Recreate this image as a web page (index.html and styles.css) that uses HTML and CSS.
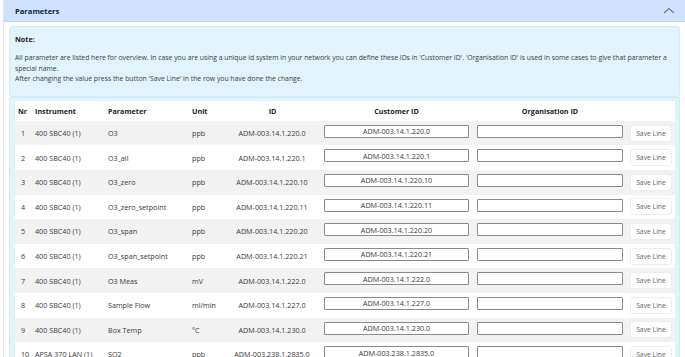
FILE: index.html
```html
<!DOCTYPE html>
<html lang="en">
<head>
    <meta charset="UTF-8">
    <title>Parameters</title>
    <link rel="stylesheet" href="styles.css">
</head>
<body>

    <div class="card">
        <div class="card-header">
            <span class="card-title">Parameters</span>
            <svg class="chevron" width="12" height="7" viewBox="0 0 12 7">
                <polyline points="1,6 6,1.5 11,6" fill="none" stroke="#6c7a92" stroke-width="1.2"/>
            </svg>
        </div>

        <div class="card-body">
            <div class="note">
                <p class="note-title">Note:</p>
                <p class="note-text">All parameter are listed here for overview. In case you are using a unique id system in your network you can define these IDs in 'Customer ID'. 'Organisation ID' is used in some cases to give that parameter a special name.<br>After changing the value press the button 'Save Line' in the row you have done the change.</p>
            </div>

            <div class="table-box">
                <table class="param-table">
                    <colgroup>
                        <col class="c-nr">
                        <col class="c-inst">
                        <col class="c-par">
                        <col class="c-unit">
                        <col class="c-id">
                        <col class="c-cust">
                        <col class="c-org">
                        <col class="c-save">
                    </colgroup>
                    <thead>
                        <tr>
                            <th>Nr</th>
                            <th>Instrument</th>
                            <th>Parameter</th>
                            <th>Unit</th>
                            <th class="center">ID</th>
                            <th class="center">Customer ID</th>
                            <th class="center">Organisation ID</th>
                            <th></th>
                        </tr>
                    </thead>
                    <tbody>
                        <tr>
                            <td class="nr">1</td><td>400 SBC40 (1)</td><td>O3</td><td>ppb</td>
                            <td class="center">ADM-003.14.1.220.0</td>
                            <td class="field"><input type="text" value="ADM-003.14.1.220.0"></td>
                            <td class="field"><input type="text" value=""></td>
                            <td><button class="save-btn">Save Line</button></td>
                        </tr>
                        <tr>
                            <td class="nr">2</td><td>400 SBC40 (1)</td><td>O3_all</td><td>ppb</td>
                            <td class="center">ADM-003.14.1.220.1</td>
                            <td class="field"><input type="text" value="ADM-003.14.1.220.1"></td>
                            <td class="field"><input type="text" value=""></td>
                            <td><button class="save-btn">Save Line</button></td>
                        </tr>
                        <tr>
                            <td class="nr">3</td><td>400 SBC40 (1)</td><td>O3_zero</td><td>ppb</td>
                            <td class="center">ADM-003.14.1.220.10</td>
                            <td class="field"><input type="text" value="ADM-003.14.1.220.10"></td>
                            <td class="field"><input type="text" value=""></td>
                            <td><button class="save-btn">Save Line</button></td>
                        </tr>
                        <tr>
                            <td class="nr">4</td><td>400 SBC40 (1)</td><td>O3_zero_setpoint</td><td>ppb</td>
                            <td class="center">ADM-003.14.1.220.11</td>
                            <td class="field"><input type="text" value="ADM-003.14.1.220.11"></td>
                            <td class="field"><input type="text" value=""></td>
                            <td><button class="save-btn">Save Line</button></td>
                        </tr>
                        <tr>
                            <td class="nr">5</td><td>400 SBC40 (1)</td><td>O3_span</td><td>ppb</td>
                            <td class="center">ADM-003.14.1.220.20</td>
                            <td class="field"><input type="text" value="ADM-003.14.1.220.20"></td>
                            <td class="field"><input type="text" value=""></td>
                            <td><button class="save-btn">Save Line</button></td>
                        </tr>
                        <tr>
                            <td class="nr">6</td><td>400 SBC40 (1)</td><td>O3_span_setpoint</td><td>ppb</td>
                            <td class="center">ADM-003.14.1.220.21</td>
                            <td class="field"><input type="text" value="ADM-003.14.1.220.21"></td>
                            <td class="field"><input type="text" value=""></td>
                            <td><button class="save-btn">Save Line</button></td>
                        </tr>
                        <tr>
                            <td class="nr">7</td><td>400 SBC40 (1)</td><td>O3 Meas</td><td>mV</td>
                            <td class="center">ADM-003.14.1.222.0</td>
                            <td class="field"><input type="text" value="ADM-003.14.1.222.0"></td>
                            <td class="field"><input type="text" value=""></td>
                            <td><button class="save-btn">Save Line</button></td>
                        </tr>
                        <tr>
                            <td class="nr">8</td><td>400 SBC40 (1)</td><td>Sample Flow</td><td>ml/min</td>
                            <td class="center">ADM-003.14.1.227.0</td>
                            <td class="field"><input type="text" value="ADM-003.14.1.227.0"></td>
                            <td class="field"><input type="text" value=""></td>
                            <td><button class="save-btn">Save Line</button></td>
                        </tr>
                        <tr>
                            <td class="nr">9</td><td>400 SBC40 (1)</td><td>Box Temp</td><td>°C</td>
                            <td class="center">ADM-003.14.1.230.0</td>
                            <td class="field"><input type="text" value="ADM-003.14.1.230.0"></td>
                            <td class="field"><input type="text" value=""></td>
                            <td><button class="save-btn">Save Line</button></td>
                        </tr>
                        <tr>
                            <td class="nr">10</td><td>APSA 370 LAN (1)</td><td>SO2</td><td>ppb</td>
                            <td class="center">ADM-003.238.1.2835.0</td>
                            <td class="field"><input type="text" value="ADM-003.238.1.2835.0"></td>
                            <td class="field"><input type="text" value=""></td>
                            <td><button class="save-btn">Save Line</button></td>
                        </tr>
                    </tbody>
                </table>
            </div>
        </div>
    </div>

</body>
</html>
```

FILE: styles.css
```css
html {
    overflow: hidden;
}

body {
    margin: 0;
    font-family: "Open Sans", "Noto Sans", sans-serif;
    font-size: 7.2px;
    color: #3a3a3a;
    background: #fff;
}

.card {
    margin-left: 3px;
    border: 1px solid #dde3ea;
    border-right: none;
    border-top: none;
}

.card-header {
    display: flex;
    align-items: center;
    justify-content: space-between;
    height: 22px;
    padding: 0 10px 0 11px;
    background: #cfe2ff;
    border-bottom: 1px solid #c2d6f3;
    box-sizing: border-box;
}

.card-title {
    font-weight: bold;
    font-size: 7.6px;
    color: #0b2551;
}

.chevron {
    display: block;
    margin-top: -1px;
}

.card-body {
    padding: 4px 5px 0 5px;
}

/* Note box */
.note {
    background: #e2f4fb;
    border: 1px solid #d2ecf5;
    border-radius: 3px;
    padding: 7px 1px 11px 5px;
}

.note p {
    margin: 0;
}

.note-title {
    font-weight: bold;
    color: #222;
    line-height: 10px;
    margin-bottom: 9px !important;
}

.note-text {
    font-size: 6.85px;
    letter-spacing: -0.01px;
    line-height: 10.6px;
    color: #3d3d3d;
}

/* Table wrapper */
.table-box {
    background: #e2f4fb;
    border: 1px solid #d2ecf5;
    border-bottom: none;
    padding: 3px 4px 0 5px;
}

.param-table {
    width: 660px;
    table-layout: fixed;
    border-collapse: collapse;
    background: #fff;
}

.c-nr { width: 17px; }
.c-inst { width: 73px; }
.c-par { width: 84px; }
.c-unit { width: 36px; }
.c-id { width: 95px; }
.c-cust { width: 153px; }
.c-org { width: 154px; }
.c-save { width: 48px; }

.param-table th {
    height: 20px;
    padding: 0 3px;
    text-align: left;
    font-weight: bold;
    color: #222;
    white-space: nowrap;
}

.param-table td {
    height: 24.6px;
    padding: 0 4px 0 3px;
    white-space: nowrap;
    vertical-align: middle;
}

.param-table tbody tr:nth-child(odd) {
    background: #f2f2f2;
}

.param-table .center {
    text-align: center;
}

.param-table td.nr {
    padding-left: 6px;
}

.param-table td.field {
    vertical-align: top;
    padding: 0 4px;
}

.field input {
    display: block;
    box-sizing: border-box;
    width: 100%;
    height: 13px;
    margin-top: 4px;
    padding: 0 2px;
    border: 1px solid #8a8a8a;
    border-radius: 1px;
    background: #fff;
    font-family: inherit;
    font-size: 7.2px;
    color: #3a3a3a;
    text-align: center;
}

.save-btn {
    display: block;
    width: 42px;
    height: 17px;
    padding: 0;
    border: 1px solid #ececec;
    border-radius: 3px;
    background: #fff;
    font-family: inherit;
    font-size: 6.8px;
    color: #666;
    cursor: pointer;
}
```
